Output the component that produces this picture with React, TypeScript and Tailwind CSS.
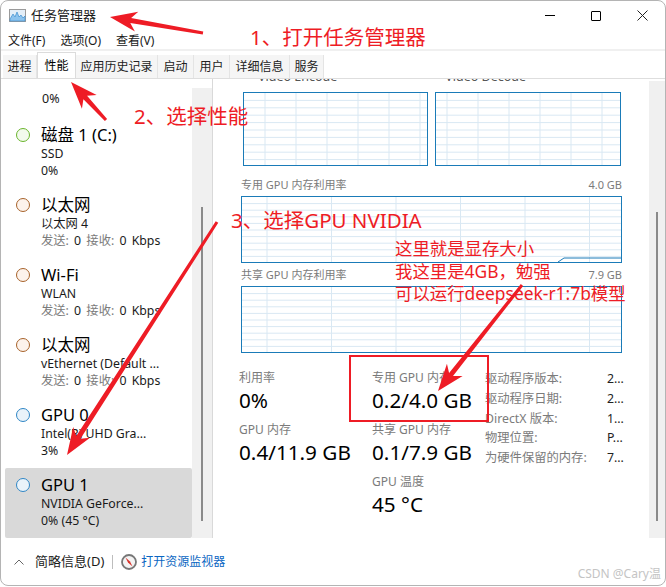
const sans = 'font-["Noto_Sans","Noto_Sans_CJK_SC",sans-serif]';

type Device = {
  color: string;
  fill: string;
  title: string;
  sub: string;
  value: React.ReactNode;
  selected?: boolean;
};

const Net = (
  <span className="[word-spacing:2px]">
    <span className="text-[#7b7b7b]">发送:</span> 0 <span className="text-[#7b7b7b]">接收:</span> 0 Kbps
  </span>
);

const devices: Device[] = [
  { color: '#6ab52d', fill: '#f2faec', title: '磁盘 1 (C:)', sub: 'SSD', value: '0%' },
  { color: '#a7622a', fill: '#fdf3ec', title: '以太网', sub: '以太网 4', value: Net },
  { color: '#a7622a', fill: '#fdf3ec', title: 'Wi-Fi', sub: 'WLAN', value: Net },
  { color: '#a7622a', fill: '#fdf3ec', title: '以太网', sub: 'vEthernet (Default ...', value: Net },
  { color: '#2f86c5', fill: '#eaf3fa', title: 'GPU 0', sub: 'Intel(R) UHD Gra...', value: '3%' },
  { color: '#2f86c5', fill: '#eaf3fa', title: 'GPU 1', sub: 'NVIDIA GeForce...', value: '0% (45 °C)', selected: true },
];

const tabs = [
  { label: '进程', w: 'w-[34px]' },
  { label: '性能', w: 'w-[39px]', active: true },
  { label: '应用历史记录', w: 'w-[82px]' },
  { label: '启动', w: 'w-[36px]' },
  { label: '用户', w: 'w-[36px]' },
  { label: '详细信息', w: 'w-[60px]' },
  { label: '服务', w: 'w-[34px]' },
];

function Chart({
  className,
  dx,
  gapX,
  gapY,
  line,
}: {
  className: string;
  dx: number;
  gapX: number;
  gapY: number;
  line?: boolean;
}) {
  const xs = Array.from({ length: 8 }, (_, i) => dx + i * gapX);
  const ys = Array.from({ length: 9 }, (_, i) => (i + 1) * gapY);
  return (
    <div className={`border border-[#1a7bb8] bg-white overflow-hidden ${className}`}>
      <svg width="100%" height="100%" className="block">
        {ys.map((y) => (
          <line key={y} x1="0" x2="400" y1={y} y2={y} stroke="#d9e8f3" />
        ))}
        {xs.map((x) => (
          <line key={x} x1={x} x2={x} y1="0" y2="100" stroke="#d9e8f3" />
        ))}
        {line && <path d="M316 65 L322 61 H381" fill="none" stroke="#1a7bb8" />}
      </svg>
    </div>
  );
}

function Stat({ label, value }: { label: string; value: string }) {
  return (
    <div className="h-[52px]">
      <div className="text-[12px] leading-[18px] text-[#7b7b7b] whitespace-nowrap">{label}</div>
      <div className="text-[20.7px] leading-[26px] text-black whitespace-nowrap">{value}</div>
    </div>
  );
}

function Arrow({ from, to, w = 5 }: { from: [number, number]; to: [number, number]; w?: number }) {
  const dx = to[0] - from[0];
  const dy = to[1] - from[1];
  const len = Math.hypot(dx, dy);
  const ux = dx / len;
  const uy = dy / len;
  const nx = -uy;
  const ny = ux;
  const at = (along: number, side: number) =>
    `${to[0] - ux * along + nx * side},${to[1] - uy * along + ny * side}`;
  const pts = [
    at(0, 0),
    at(27, 10),
    at(21, w / 2),
    `${from[0] + nx * 1.5},${from[1] + ny * 1.5}`,
    `${from[0] - nx * 1.5},${from[1] - ny * 1.5}`,
    at(21, -w / 2),
    at(27, -10),
  ];
  return <polygon points={pts.join(' ')} fill="#ee1c25" />;
}

export default function App() {
  return (
    <div className={`relative w-[666px] h-[587px] overflow-hidden bg-white text-[#1a1a1a] ${sans}`}>
      <div className="flex flex-col h-[586px] border border-[#b4b4b4] rounded-[8px] overflow-hidden bg-white">
        {/* title bar */}
        <div className="flex items-center h-[30px] shrink-0 pl-[8px] pb-[1px]">
          <svg width="17" height="13" viewBox="0 0 17 13">
            <rect x="0.5" y="0.5" width="16" height="12" fill="#e3eef8" stroke="#9a9a9a" />
            <path d="M1 10 L4 5 L6 8 L8 3 L10 8 L12 6 L14 9 L16 7 V12 H1 Z" fill="#8cc3ee" stroke="#3f8fd0" strokeWidth="0.7" />
          </svg>
          <span className="ml-[5px] text-[13px]">任务管理器</span>
          <div className="ml-auto flex items-center gap-[36px] pr-[17px]">
            <div className="w-[10px] h-px bg-black" />
            <div className="w-[10px] h-[10px] border border-black rounded-[1px]" />
            <svg width="11" height="11" viewBox="0 0 11 11">
              <path d="M0.5 0.5 L10.5 10.5 M10.5 0.5 L0.5 10.5" stroke="#222" />
            </svg>
          </div>
        </div>

        {/* menu */}
        <div className="flex h-[20px] shrink-0 items-center gap-[15px] pl-[7px] pt-[2px] text-[12px] border-b-[2px] border-[#f0f0f0]">
          <span>文件(F)</span>
          <span>选项(O)</span>
          <span>查看(V)</span>
        </div>

        {/* tabs */}
        <div className="flex h-[28px] shrink-0 items-end pl-[2px] border-b border-[#dedede] text-[12px]">
          {tabs.map((t) => (
            <div
              key={t.label}
              className={`flex items-center justify-center ${t.w} ${
                t.active
                  ? 'h-[26px] bg-white border border-b-0 border-[#dcdcdc] text-black'
                  : 'h-[23px] bg-[#f5f5f5] border-r border-[#e4e4e4] text-[#222]'
              }`}
            >
              {t.label}
            </div>
          ))}
        </div>

        {/* body */}
        <div className="flex flex-1 min-h-0">
          <div className="flex w-[212px] shrink-0 border-r border-[#d9d9d9] h-[459px]">
            <div className="w-[191px] pl-[4px] shrink-0">
              <div className="h-[39px] pl-[37px] pt-[11px] text-[12.5px] leading-[18px]">0%</div>
              {devices.map((d) => (
                <div
                  key={d.title + d.sub}
                  className={`flex w-[187px] h-[70px] pl-[11px] pt-[7px] rounded-[2px] ${d.selected ? 'bg-[#d9d9d9]' : ''}`}
                >
                  <div
                    className="w-[14px] h-[14px] mt-[3px] rounded-full border shrink-0"
                    style={{ borderColor: d.color, backgroundColor: d.fill }}
                  />
                  <div className="ml-[11px] whitespace-nowrap">
                    <div className="text-[16.5px] leading-[20px] text-black">{d.title}</div>
                    <div className="text-[12.3px] leading-[18px]">{d.sub}</div>
                    <div className="text-[12.3px] leading-[16px]">{d.value}</div>
                  </div>
                </div>
              ))}
            </div>
            <div className="flex-1 bg-[#f0f0f0] mt-[9px] flex justify-center">
              <div className="w-[2px] h-[314px] mt-[119px] bg-[#8a8a8a]" />
            </div>
          </div>

          <div className="flex flex-1 min-w-0">
            <div className="flex-1 min-w-0">
              <div className="flex h-[5px] mb-[8px] overflow-hidden text-[12.5px] leading-[14px] text-[#555]">
                <span className="ml-[45px] -mt-[9px]">Video Encode</span>
                <span className="ml-[108px] -mt-[9px]">Video Decode</span>
              </div>
              <div className="pl-[30px] flex gap-[7px]">
                <Chart className="w-[185px] h-[74px]" dx={-10} gapX={31} gapY={7.4} />
                <Chart className="w-[186px] h-[74px]" dx={11} gapX={31} gapY={7.4} />
              </div>
              <div className="pl-[28px] pr-[27px]">
                <div className="flex justify-between mt-[10px] h-[18px] text-[11px] leading-[18px] text-[#7b7b7b]">
                  <span>专用 GPU 内存利用率</span>
                  <span>4.0 GB</span>
                </div>
                <Chart className="w-[381px] h-[67px] mt-[2px]" dx={25} gapX={64.5} gapY={6.6} line />
                <div className="flex justify-between mt-[3px] h-[18px] text-[11px] leading-[18px] text-[#7b7b7b]">
                  <span>共享 GPU 内存利用率</span>
                  <span>7.9 GB</span>
                </div>
                <Chart className="w-[381px] h-[67px] mt-[2px]" dx={25} gapX={64.5} gapY={6.6} />
              </div>
              <div className="flex mt-[16px] pl-[26px]">
                <div className="w-[133px]">
                  <Stat label="利用率" value="0%" />
                  <Stat label="GPU 内存" value="0.4/11.9 GB" />
                </div>
                <div className="w-[113px]">
                  <Stat label="专用 GPU 内存" value="0.2/4.0 GB" />
                  <Stat label="共享 GPU 内存" value="0.1/7.9 GB" />
                  <Stat label="GPU 温度" value="45 °C" />
                </div>
                <div className="self-start text-[12.3px] leading-[19.8px] text-[#7b7b7b] grid grid-cols-[122px_20px] whitespace-nowrap">
                  <span>驱动程序版本:</span><span className="text-[#222]">2...</span>
                  <span>驱动程序日期:</span><span className="text-[#222]">2...</span>
                  <span>DirectX 版本:</span><span className="text-[#222]">1...</span>
                  <span>物理位置:</span><span className="text-[#222]">P...</span>
                  <span>为硬件保留的内存:</span><span className="text-[#222]">7...</span>
                </div>
              </div>
            </div>
            <div className="shrink-0 w-[16px] h-[457px] mt-[2px] bg-[#f0f0f0] flex justify-center">
              <div className="w-[2px] h-[309px] mt-[131px] bg-[#8a8a8a]" />
            </div>
          </div>
        </div>

        {/* footer */}
        <div className="flex items-center h-[47px] shrink-0 pl-[13px] text-[13px]">
          <svg width="10" height="6" viewBox="0 0 10 6">
            <path d="M0.5 5.5 L5 1 L9.5 5.5" fill="none" stroke="#666" />
          </svg>
          <span className="ml-[11px]">简略信息(D)</span>
          <div className="w-px h-[14px] bg-[#bdbdbd] ml-[8px]" />
          <svg width="16" height="16" viewBox="0 0 16 16" className="ml-[8px]">
            <circle cx="8" cy="8" r="7" fill="#f3f3f3" stroke="#777" strokeWidth="1.8" />
            <path d="M4.5 3.5 L9 7.5 L11.5 12.5 L7 8.5 Z" fill="#d8312a" />
          </svg>
          <span className="ml-[4px] text-[12px] text-[#0a66c2]">打开资源监视器</span>
        </div>
      </div>

      {/* annotations */}
      <svg width="666" height="587" className="absolute inset-0 pointer-events-none">
        <Arrow from={[203, 33]} to={[110, 17]} />
        <Arrow from={[106, 120]} to={[71, 82]} />
        <Arrow from={[217, 222]} to={[67, 455]} />
        <Arrow from={[522, 285]} to={[438, 391]} />
      </svg>
      <div className="absolute left-[349px] top-[355px] w-[140px] h-[67px] border-2 border-[#ee1c25]" />
      <div className="absolute left-[250px] top-[23px] text-[20.5px] leading-[28px] text-[#ee1c25] whitespace-nowrap">1、打开任务管理器</div>
      <div className="absolute left-[134px] top-[102px] text-[20.5px] leading-[28px] text-[#ee1c25] whitespace-nowrap">2、选择性能</div>
      <div className="absolute left-[231px] top-[206px] text-[20.5px] leading-[28px] text-[#ee1c25] whitespace-nowrap">3、选择GPU NVIDIA</div>
      <div className="absolute left-[395px] top-[237px] text-[17.4px] leading-[22.5px] text-[#ee1c25] whitespace-nowrap">
        <div>这里就是显存大小</div>
        <div>我这里是4GB，勉强</div>
        <div>可以运行deepseek-r1:7b模型</div>
      </div>
      <div className="absolute right-[5px] bottom-[5px] text-[12px] leading-[16px] text-[#c4c4c4] whitespace-nowrap">CSDN @Cary温</div>
    </div>
  );
}
